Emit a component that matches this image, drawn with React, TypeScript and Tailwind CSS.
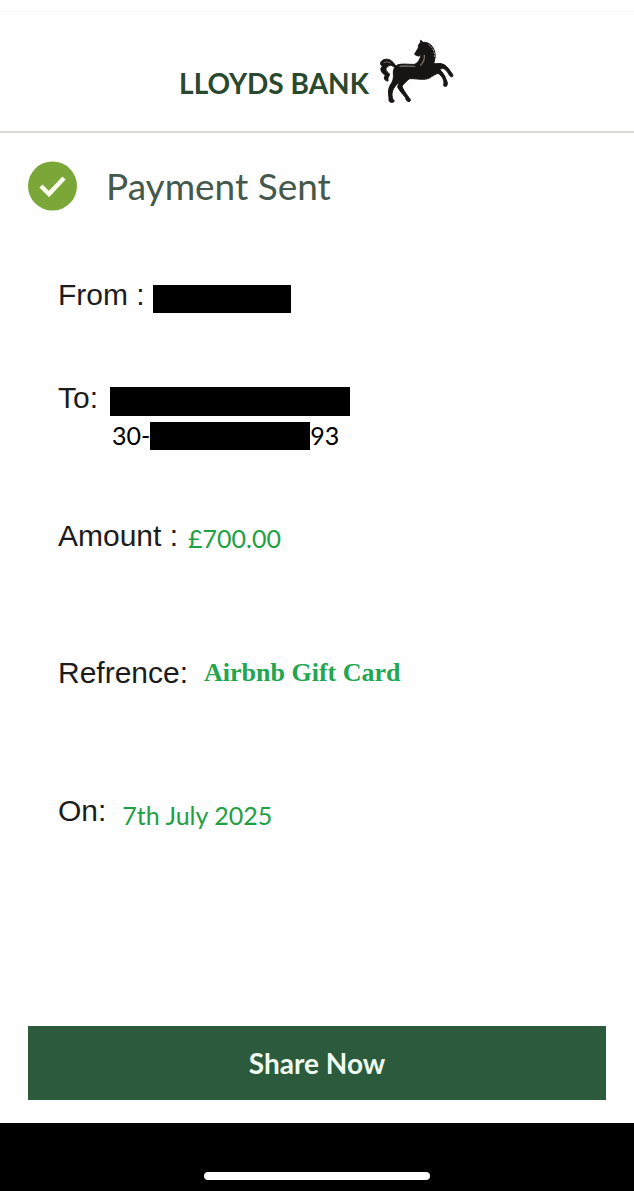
import type { ReactNode } from "react";

function Horse() {
  return (
    <svg viewBox="30 24 228 204" className="h-[68px] w-[76px]" role="img" aria-label="Black horse">
      <g fill="#171514" stroke="#171514" strokeWidth="3" strokeLinejoin="round">
        <path d="M154 38 L155 31 L162 37 C173 36 184 41 190 50 C197 60 201 75 197 89 L194 101 C204 102 216 98 227 105 C236 111 243 122 250 132 C255 139 249 143 244 139 L239 132 C235 124 229 117 221 115 L212 118 C220 127 228 137 231 148 C235 154 237 164 232 169 C226 171 221 166 225 160 C225 147 217 136 207 130 C199 133 190 138 181 144 C166 152 142 145 122 146 C112 153 104 161 99 169 C102 179 111 190 118 201 C124 205 127 214 120 215 C113 215 111 208 109 202 C101 192 91 182 86 171 L91 154 C82 165 74 173 71 182 C67 192 70 201 71 207 C77 211 77 217 70 217 C60 218 59 210 60 203 C58 189 57 177 64 165 C73 153 74 142 73 132 C72 120 76 112 82 107 C93 99 119 104 137 103 C148 99 152 88 157 75 C153 76 150 80 145 77 C139 77 134 71 140 67 L148 54 C148 46 150 41 154 38 Z" />
        <path d="M81 109 C72 115 72 105 64 106 C55 108 48 116 52 122 C56 128 65 131 60 138 C56 142 57 148 57 153 C46 153 43 143 49 136 C41 131 34 123 36 114 L40 109 C31 103 34 92 45 89 C60 84 71 93 81 109 Z" />
      </g>
      <g fill="none" strokeLinecap="round">
        <path d="M180 45 C193 54 198 68 196 84" stroke="#a39d95" strokeWidth="3" strokeDasharray="4 5" />
        <path d="M166 76 C167 86 163 97 155 105" stroke="#77716b" strokeWidth="4" />
        <path d="M93 109 C108 106 122 110 137 109" stroke="#77716b" strokeWidth="4" />
        <path d="M45 98 C52 94 58 95 64 99" stroke="#77716b" strokeWidth="3" />
      </g>
    </svg>
  );
}

function Redacted({ className }: { className: string }) {
  return <span aria-hidden="true" className={`block bg-black ${className}`} />;
}

function Row({ label, children, className = "" }: { label: string; children: ReactNode; className?: string }) {
  return (
    <div className={`flex ${className}`}>
      <dt className="text-[30px] leading-9 text-[#1c1c1c]">{label}</dt>
      {children}
    </div>
  );
}

export default function App() {
  return (
    <div className="flex min-h-screen flex-col bg-[#fefefe] font-['Liberation_Sans',Arial,sans-serif]">
      <div className="h-3 border-b border-[#f7f7f7]" />
      <header className="flex items-start justify-center gap-2.5 border-b-2 border-[#d9dad4] pt-[26px] pb-[25px]">
        <span className="pt-[27px] font-['Lato',sans-serif] text-[28px] leading-9 font-bold text-[#29492f]">LLOYDS BANK</span>
        <Horse />
      </header>

      <main className="flex flex-1 flex-col px-7 pt-7 pb-[23px]">
        <div className="flex items-center gap-7">
          <svg viewBox="0 0 50 50" className="size-[50px]" aria-hidden="true">
            <circle cx="24.5" cy="25" r="24.5" fill="#7ba638" />
            <path d="M13 25 L21 33 L36 17" fill="none" stroke="#fbfff0" strokeWidth="4.5" />
          </svg>
          <h1 className="font-['Lato',sans-serif] text-[37px] leading-[50px] text-[#44584c]">Payment Sent</h1>
        </div>

        <dl className="flex flex-col pt-[66px] pl-[30px]">
          <Row label="From :" className="items-end gap-2">
            <dd>
              <Redacted className="h-7 w-[138px]" />
            </dd>
          </Row>
          <Row label="To:" className="mt-[67px] gap-3">
            <dd className="pt-[7px]">
              <Redacted className="h-[29px] w-60" />
              <div className="mt-1.5 flex h-7 items-start pl-0.5 font-['Lato',sans-serif] text-[25px] leading-[26px] text-black">
                <span>30-</span>
                <Redacted className="h-7 w-40" />
                <span>93</span>
              </div>
            </dd>
          </Row>
          <Row label="Amount :" className="mt-[68px] gap-2.5">
            <dd className="pt-0.5 font-['Lato',sans-serif] text-[25px] leading-9 text-[#1fa045]">£700.00</dd>
          </Row>
          <Row label="Refrence:" className="mt-[99px] gap-4">
            <dd className="font-['Liberation_Serif',serif] text-[26px] leading-9 font-bold text-[#22a651]">Airbnb Gift Card</dd>
          </Row>
          <Row label="On:" className="mt-[102px] gap-4">
            <dd className="pt-1 font-['Lato',sans-serif] text-[25px] leading-9 text-[#1fa045]">7th July 2025</dd>
          </Row>
        </dl>

        <button
          type="button"
          className="mt-auto h-[74px] w-full bg-[#2c5a3d] font-['Lato',sans-serif] text-[28px] font-bold text-[#effaf0]"
        >
          Share Now
        </button>
      </main>

      <footer className="flex h-[68px] items-end justify-center bg-black pb-[11px]">
        <div className="h-2 w-[226px] rounded-full bg-white" />
      </footer>
    </div>
  );
}
